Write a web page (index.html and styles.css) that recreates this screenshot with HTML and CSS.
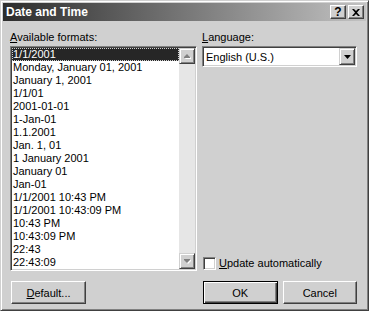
FILE: index.html
```html
<!DOCTYPE html>
<html lang="en">
<head>
    <meta charset="UTF-8">
    <title>Date and Time</title>
    <link rel="stylesheet" href="styles.css">
</head>
<body>
    <div class="window">
        <div class="titlebar">
            <span class="title">Date and Time</span>
            <div class="caption-buttons">
                <span class="cap-btn help">?</span>
                <span class="cap-btn close">
                    <svg width="8" height="7" viewBox="0 0 8 7"><path d="M0 0h2l2 2 2-2h2L5 3.5 8 7H6L4 5 2 7H0l3-3.5z" fill="#000"/></svg>
                </span>
            </div>
        </div>

        <div class="content">
            <div class="label"><u>A</u>vailable formats:</div>
            <div class="label"><u>L</u>anguage:</div>

            <div class="listbox">
                <ul class="items">
                    <li class="selected">1/1/2001</li>
                    <li>Monday, January 01, 2001</li>
                    <li>January 1, 2001</li>
                    <li>1/1/01</li>
                    <li>2001-01-01</li>
                    <li>1-Jan-01</li>
                    <li>1.1.2001</li>
                    <li>Jan. 1, 01</li>
                    <li>1 January 2001</li>
                    <li>January 01</li>
                    <li>Jan-01</li>
                    <li>1/1/2001 10:43 PM</li>
                    <li>1/1/2001 10:43:09 PM</li>
                    <li>10:43 PM</li>
                    <li>10:43:09 PM</li>
                    <li>22:43</li>
                    <li>22:43:09</li>
                </ul>
                <div class="scrollbar">
                    <span class="scroll-btn">
                        <svg width="7" height="5" viewBox="0 0 7 5"><path d="M4 1l3 3v1H1z" fill="#fff"/><path d="M3 0l3 3v1H0V3z" fill="#808080"/></svg>
                    </span>
                    <span class="scroll-btn">
                        <svg width="7" height="5" viewBox="0 0 7 5"><path d="M1 1h6v1L4 5z" fill="#fff"/><path d="M0 0h6v1L3 4 0 1z" fill="#808080"/></svg>
                    </span>
                </div>
            </div>

            <div class="side">
                <div class="combo">
                    <span class="combo-text">English (U.S.)</span>
                    <span class="combo-btn">
                        <svg width="7" height="4" viewBox="0 0 7 4"><path d="M0 0h7L3.5 4z" fill="#000"/></svg>
                    </span>
                </div>
                <div class="check-row">
                    <span class="checkbox"></span>
                    <span><u>U</u>pdate automatically</span>
                </div>
            </div>

            <div class="buttons-left">
                <span class="btn"><u>D</u>efault...</span>
            </div>
            <div class="buttons-right">
                <span class="btn default">OK</span>
                <span class="btn">Cancel</span>
            </div>
        </div>
    </div>
</body>
</html>
```

FILE: styles.css
```css
body {
    margin: 0;
    padding: 0;
    background: #d0d0d0;
}
.window {
    width: 369px;
    height: 311px;
    box-sizing: border-box;
    border: 1px solid;
    border-color: #d0d0d0 #404040 #404040 #d0d0d0;
    box-shadow: inset 1px 1px #fff, inset -1px -1px #808080;
    padding: 2px;
    background: #d0d0d0;
    font: 11px "Liberation Sans", Arial, sans-serif;
    color: #000;
}
.titlebar {
    height: 18px;
    display: flex;
    align-items: center;
    justify-content: space-between;
    padding: 0 2px 0 3px;
    background: linear-gradient(to right, #2c2c2c, #c2c2c2);
}
.title {
    color: #fff;
    font-weight: bold;
    font-size: 12px;
    line-height: 18px;
}
.caption-buttons {
    display: flex;
    gap: 2px;
}
.cap-btn {
    width: 16px;
    height: 14px;
    box-sizing: border-box;
    display: flex;
    align-items: center;
    justify-content: center;
    background: #d0d0d0;
    border: 1px solid;
    border-color: #fff #404040 #404040 #fff;
    box-shadow: inset -1px -1px #808080;
}
.help {
    font-weight: bold;
    font-size: 12px;
    line-height: 12px;
}
.content {
    display: grid;
    grid-template-columns: 187px 155px;
    column-gap: 5px;
    padding: 10px 0 0 7px;
}
.label {
    line-height: 13px;
    margin-bottom: 2px;
}
.listbox {
    height: 225px;
    box-sizing: border-box;
    display: flex;
    background: #fff;
    border: 1px solid;
    border-color: #808080 #fff #fff #808080;
    box-shadow: inset 1px 1px #404040, inset -1px -1px #d0d0d0;
    padding: 1px;
}
.items {
    list-style: none;
    margin: 0;
    padding: 0;
    flex: 1;
}
.items li {
    line-height: 13px;
    height: 13px;
    padding-left: 1px;
    white-space: nowrap;
}
.items li.selected {
    background: #262626;
    color: #fff;
    outline: 1px dotted #cfcfcf;
    outline-offset: -1px;
}
.scrollbar {
    width: 16px;
    display: flex;
    flex-direction: column;
    justify-content: space-between;
    background: #e6e6e6;
}
.scroll-btn {
    width: 16px;
    height: 16px;
    box-sizing: border-box;
    display: flex;
    align-items: center;
    justify-content: center;
    background: #d0d0d0;
    border: 1px solid;
    border-color: #d0d0d0 #404040 #404040 #d0d0d0;
    box-shadow: inset 1px 1px #fff, inset -1px -1px #808080;
}
.side {
    display: flex;
    flex-direction: column;
    justify-content: space-between;
}
.combo {
    height: 21px;
    box-sizing: border-box;
    display: flex;
    align-items: center;
    background: #fff;
    border: 1px solid;
    border-color: #808080 #fff #fff #808080;
    box-shadow: inset 1px 1px #404040, inset -1px -1px #d0d0d0;
    padding: 1px;
}
.combo-text {
    flex: 1;
    padding-left: 2px;
}
.combo-btn {
    width: 16px;
    height: 17px;
    box-sizing: border-box;
    display: flex;
    align-items: center;
    justify-content: center;
    background: #d0d0d0;
    border: 1px solid;
    border-color: #d0d0d0 #404040 #404040 #d0d0d0;
    box-shadow: inset 1px 1px #fff, inset -1px -1px #808080;
}
.check-row {
    display: flex;
    align-items: center;
    gap: 3px;
    margin: 0 0 1px 1px;
    line-height: 13px;
}
.checkbox {
    width: 13px;
    height: 13px;
    box-sizing: border-box;
    background: #fff;
    border: 1px solid;
    border-color: #808080 #fff #fff #808080;
    box-shadow: inset 1px 1px #404040, inset -1px -1px #d0d0d0;
}
.buttons-left,
.buttons-right {
    display: flex;
    gap: 5px;
    margin-top: 10px;
}
.buttons-left {
    padding-left: 1px;
}
.buttons-right {
    padding-left: 1px;
}
.btn {
    width: 75px;
    height: 23px;
    box-sizing: border-box;
    display: flex;
    align-items: center;
    justify-content: center;
    background: #d0d0d0;
    border: 1px solid;
    border-color: #fff #404040 #404040 #fff;
    box-shadow: inset -1px -1px #808080;
}
.btn.default {
    border-color: #000;
    box-shadow: inset 1px 1px #fff, inset -1px -1px #404040, inset -2px -2px #808080;
}
```
